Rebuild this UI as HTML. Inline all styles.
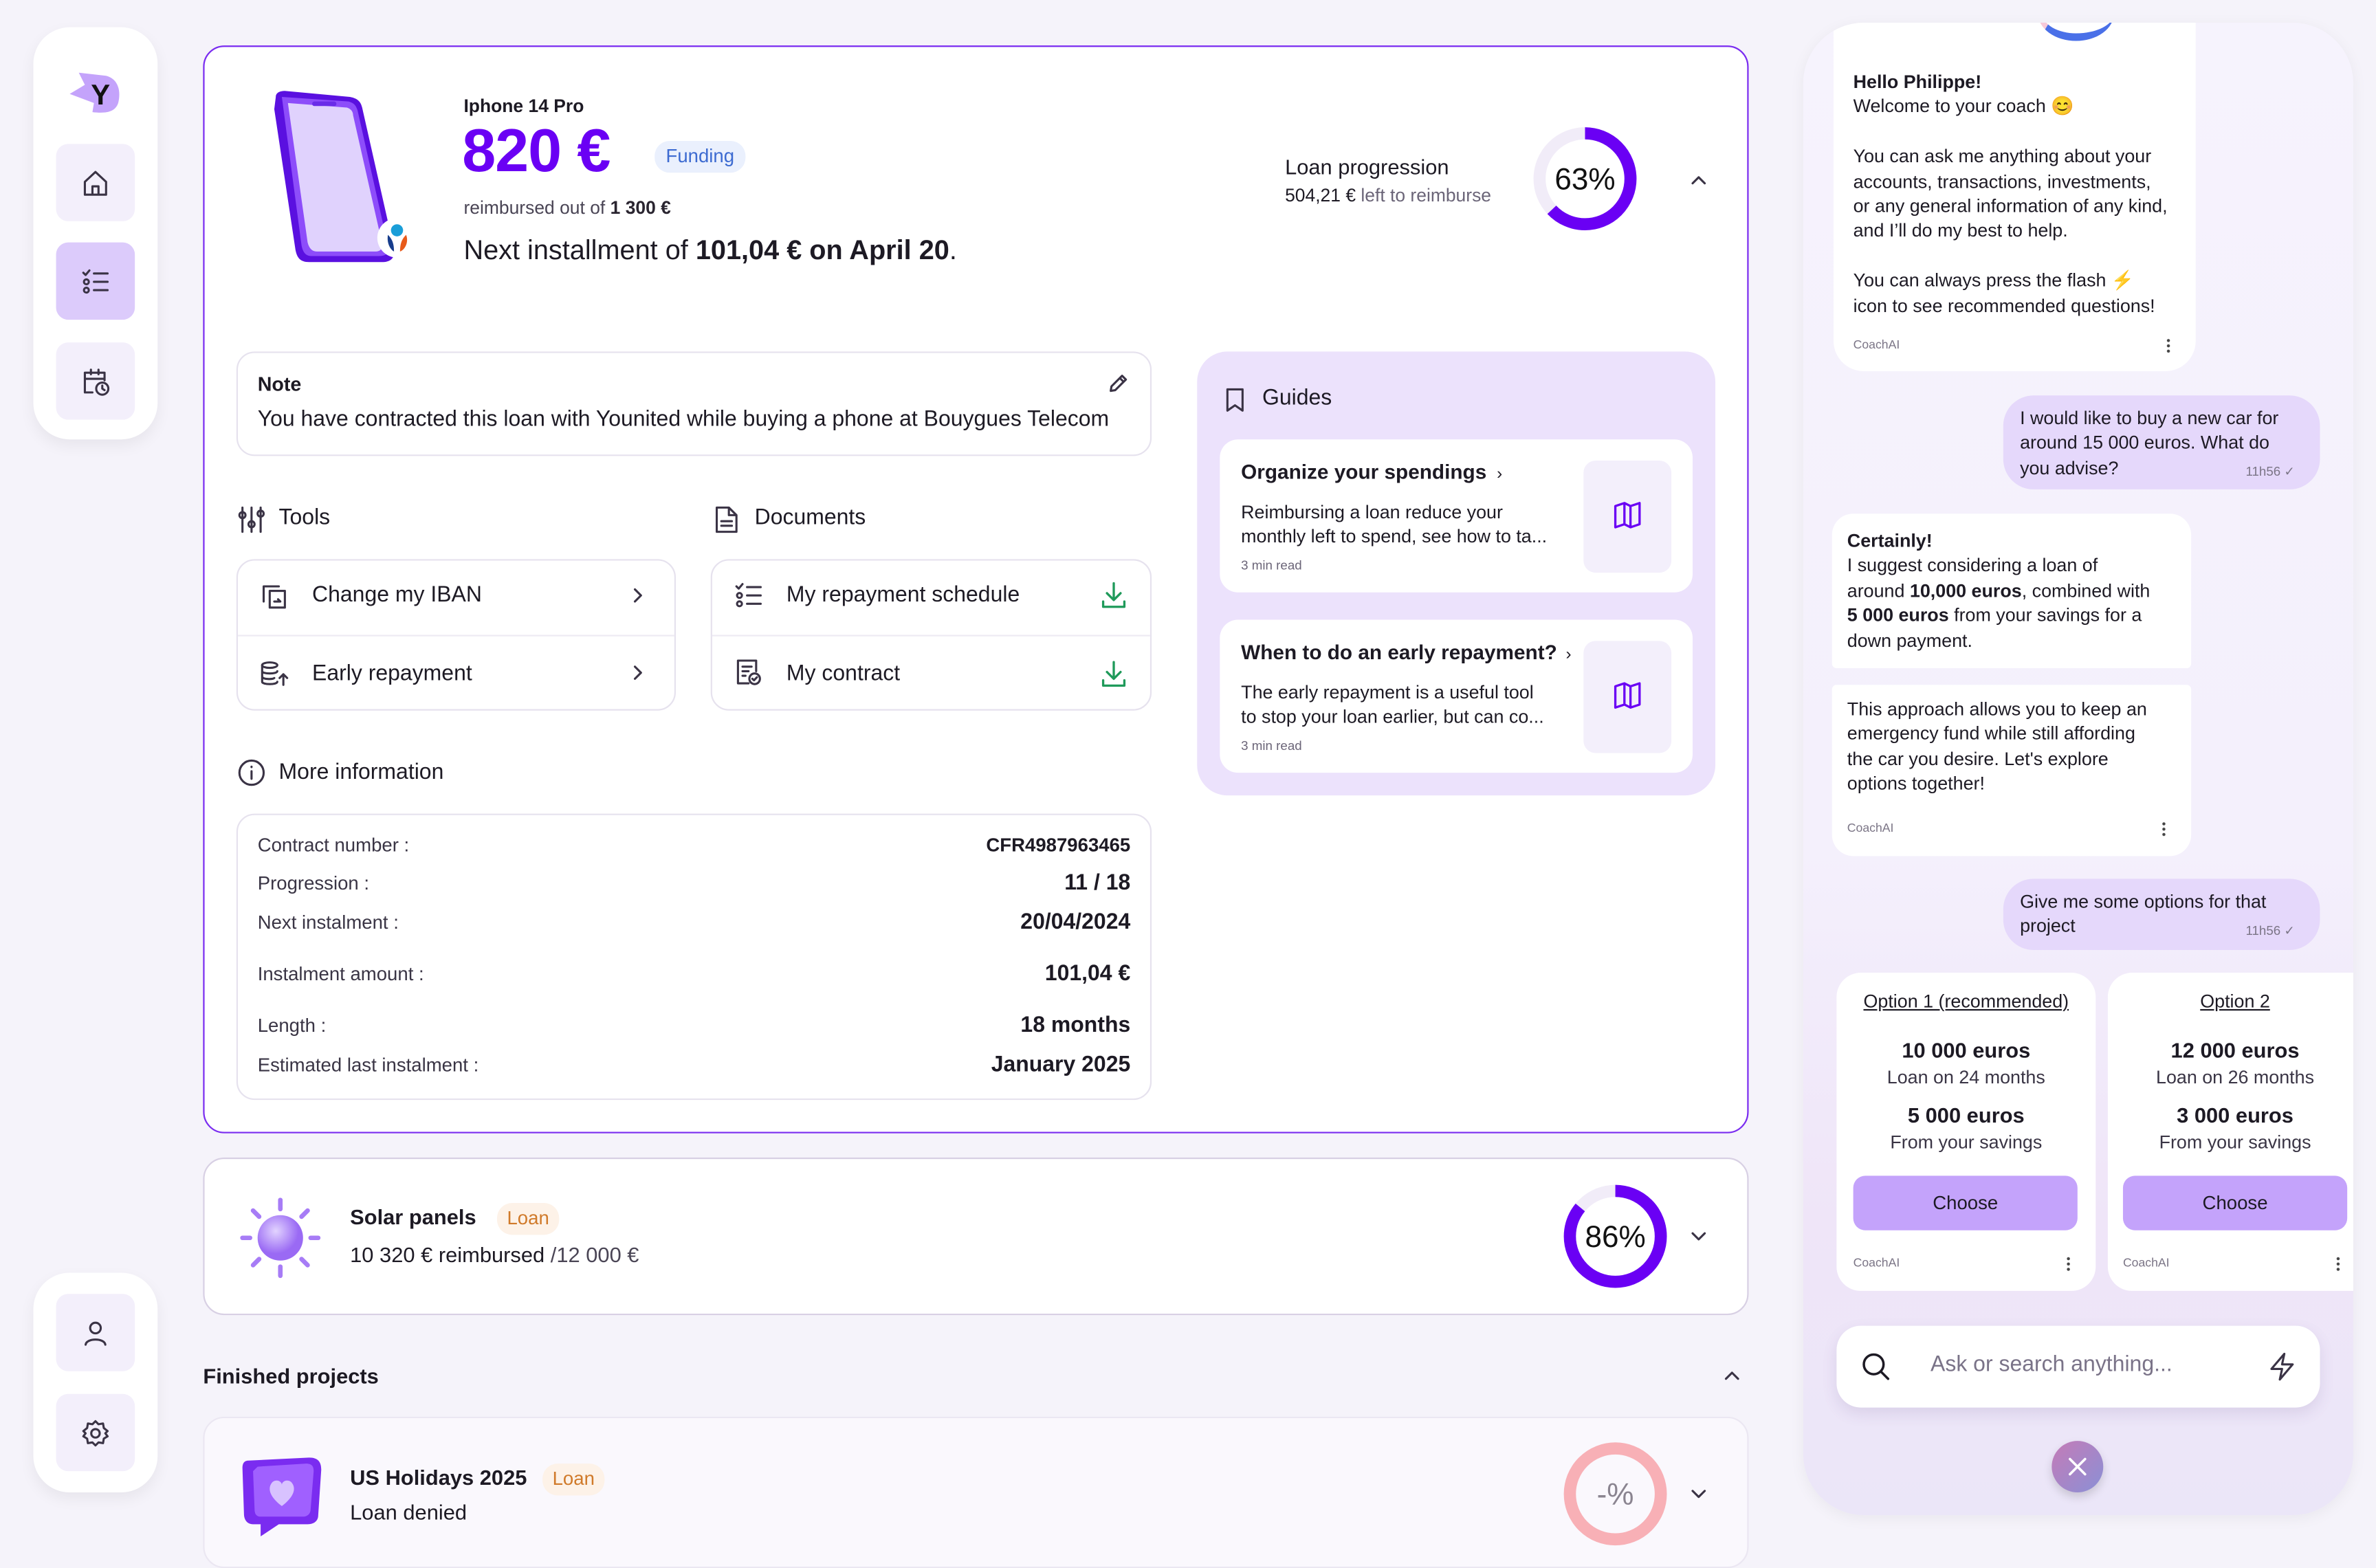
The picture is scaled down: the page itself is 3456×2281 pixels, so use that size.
<!DOCTYPE html>
<html><head><meta charset="utf-8">
<style>
*{box-sizing:border-box;margin:0;padding:0}
html,body{width:3456px;height:2234px;overflow:hidden;background:#f5f3fa}
#s{position:absolute;left:0;top:0;width:1568px;height:1014px;transform:scale(2.2041);transform-origin:0 0;font-family:"Liberation Sans",sans-serif;color:#1d1a24}
.a{position:absolute}
.t{position:absolute;white-space:nowrap;line-height:1}
.card{position:absolute;background:#fff;border-radius:12px}
.ib{position:absolute;left:37px;width:52px;height:51px;border-radius:8px;background:#f3effb;display:flex;align-items:center;justify-content:center}
svg{display:block}
.ln{stroke:#3a3345;fill:none;stroke-width:1.4;stroke-linecap:round;stroke-linejoin:round}
.chat{position:absolute;font-size:12.2px;line-height:16.4px;color:#1d1a24;white-space:nowrap}
.coach{position:absolute;font-size:8px;color:#7b7586}
.dots{position:absolute;width:2px;height:10px;background:radial-gradient(circle,#444 0.9px,transparent 1.1px) 0 0/2px 3.5px}
</style></head><body><div id="s">

<!-- sidebar top -->
<div class="card" style="left:22px;top:18px;width:82px;height:272px;border-radius:24px;box-shadow:0 4px 10px rgba(0,0,0,.06)"></div>
<svg class="a" style="left:44px;top:46px" width="38" height="32" viewBox="0 0 38 32"><path d="M8 2 L26 4 C34 6 36 14 34 22 C32 28 26 29 17 28 L18 22 L2 16 L12 10 Z" fill="#c4a3fb"/><text x="16" y="23" font-family="Liberation Sans" font-weight="700" font-size="19" fill="#111">Y</text></svg>
<div class="ib" style="top:95px"><svg width="20" height="20" viewBox="0 0 20 20"><path class="ln" d="M3 9 L10 2.5 L17 9 V17.5 H3 Z M8 17.5 V12 H12 V17.5"/></svg></div>
<div class="ib" style="top:160px;background:#dccbfb"><svg width="20" height="20" viewBox="0 0 20 20"><path class="ln" d="M2 4 L3.5 5.5 L6 2.5 M9 4.5 H18 M9 10 H18 M9 15.5 H18"/><circle class="ln" cx="4" cy="10" r="1.6"/><circle class="ln" cx="4" cy="15.5" r="1.6"/></svg></div>
<div class="ib" style="top:226px"><svg width="22" height="22" viewBox="0 0 22 22"><path class="ln" d="M9 18 H4 V5 H17 V10 M4 9 H17 M8 3 V6 M13 3 V6"/><circle class="ln" cx="15.5" cy="15.5" r="4"/><path class="ln" d="M15.5 13.5 V15.5 L17 16.5"/></svg></div>

<!-- sidebar bottom -->
<div class="card" style="left:22px;top:840px;width:82px;height:145px;border-radius:24px;box-shadow:0 4px 10px rgba(0,0,0,.06)"></div>
<div class="ib" style="top:854px"><svg width="20" height="20" viewBox="0 0 20 20"><circle class="ln" cx="10" cy="6.5" r="3.5"/><path class="ln" d="M3.5 17.5 C4 13 16 13 16.5 17.5"/></svg></div>
<div class="ib" style="top:920px"><svg width="20" height="20" viewBox="0 0 20 20"><circle class="ln" cx="10" cy="10" r="2.8"/><path class="ln" d="M10 2 L12 4 L15 3.5 L15.5 6.5 L18 8.5 L16.5 10 L18 12 L15.5 13.5 L15 16.5 L12 16 L10 18 L8 16 L5 16.5 L4.5 13.5 L2 12 L3.5 10 L2 8.5 L4.5 6.5 L5 3.5 L8 4 Z"/></svg></div>

<!-- main card -->
<div class="card" style="left:134px;top:30px;width:1020px;height:718px;border:1.5px solid #7a2cf0;border-radius:14px"></div>
<svg class="a" style="left:176px;top:58px" width="104" height="120" viewBox="0 0 104 120"><path d="M6 6 C6 3 9 2 12 2 L55 6 C60 7 62 9 63 13 L84 106 C85 112 82 115 76 115 L28 115 C22 115 20 112 19 107 L5 14 Z" fill="#5a10e0"/><path d="M10 6 L54 9 C58 10 59 12 60 15 L80 104 C81 109 79 111 74 111 L30 111 C26 111 24 109 23 104 Z" fill="#8d4dfa"/><path d="M14 10 L53 13 C56 14 57 16 57 18 L76 102 C77 106 75 108 72 108 L33 108 C30 108 28 106 27 102 Z" fill="#e0d2fd"/><rect x="30" y="9" width="16" height="3" rx="1.5" fill="#6a2ce8"/><circle cx="86" cy="99" r="13" fill="#fff"/><circle cx="86" cy="94" r="4" fill="#1a9ed8"/><path d="M80 97 C79 103 82 107 84 108 C84 103 83 100 80 97Z" fill="#173d8c"/><path d="M92 97 C94 102 91 107 88 108 C88 103 89 100 92 97Z" fill="#e85a1a"/></svg>
<div class="t" style="left:306px;top:64px;font-size:12px;font-weight:700">Iphone 14 Pro</div>
<div class="t" style="left:305px;top:80px;font-size:40px;font-weight:700;color:#6a00f4;letter-spacing:-0.5px">820 €</div>
<div class="a" style="left:432px;top:93px;width:60px;height:21px;border-radius:10px;background:#eaf0fd;color:#3d6bd1;font-size:12.5px;text-align:center;line-height:21px">Funding</div>
<div class="t" style="left:306px;top:131px;font-size:12px;color:#4a4555">reimbursed out of <b style="color:#2a2530">1 300 €</b></div>
<div class="t" style="left:306px;top:156px;font-size:18px">Next installment of <b>101,04 € on April 20</b>.</div>
<div class="t" style="left:848px;top:103px;font-size:14px">Loan progression</div>
<div class="t" style="left:848px;top:123px;font-size:12px;color:#1d1a24">504,21 € <span style="color:#6b6578">left to reimburse</span></div>
<svg class="a" style="left:1010px;top:82px" width="72" height="72" viewBox="0 0 72 72"><circle cx="36" cy="36" r="30" fill="none" stroke="#f1ecf8" stroke-width="8"/><circle cx="36" cy="36" r="30" fill="none" stroke="#6a00f4" stroke-width="8" stroke-dasharray="118.8 188.5" transform="rotate(-90 36 36)"/><text x="36" y="43" text-anchor="middle" font-family="Liberation Sans" font-size="20" fill="#111">63%</text></svg>
<svg class="a" style="left:1115px;top:113px" width="12" height="12" viewBox="0 0 12 12"><path class="ln" d="M2 8 L6 4 L10 8"/></svg>

<!-- note -->
<div class="card" style="left:156px;top:232px;width:604px;height:69px;border:1.3px solid #e6e2ee"></div>
<div class="t" style="left:170px;top:247px;font-size:13px;font-weight:700">Note</div>
<div class="t" style="left:170px;top:270px;font-size:14.5px">You have contracted this loan with Younited while buying a phone at Bouygues Telecom</div>
<svg class="a" style="left:731px;top:246px" width="14" height="14" viewBox="0 0 14 14"><path class="ln" d="M2 12 L2.5 9 L9.5 2 L12 4.5 L5 11.5 Z M8 3.5 L10.5 6"/></svg>

<!-- tools / docs -->
<svg class="a" style="left:156px;top:333px" width="20" height="20" viewBox="0 0 20 20"><path class="ln" d="M4 2 V18 M10 2 V18 M16 2 V18"/><circle cx="4" cy="7" r="2" fill="#fff" class="ln"/><circle cx="10" cy="13" r="2" fill="#fff" class="ln"/><circle cx="16" cy="6" r="2" fill="#fff" class="ln"/></svg>
<div class="t" style="left:184px;top:335px;font-size:14.5px">Tools</div>
<svg class="a" style="left:470px;top:333px" width="18" height="20" viewBox="0 0 18 20"><path class="ln" d="M3 2 H11 L16 7 V18 H3 Z M11 2 V7 H16 M6 11 H13 M6 14 H13"/></svg>
<div class="t" style="left:498px;top:335px;font-size:14.5px">Documents</div>

<div class="card" style="left:156px;top:369px;width:290px;height:100px;border:1.3px solid #e6e2ee"></div>
<div class="a" style="left:157px;top:419px;width:288px;height:1px;background:#eeebf3"></div>
<svg class="a" style="left:171px;top:384px" width="20" height="20" viewBox="0 0 20 20"><path class="ln" d="M3 13 V3 H13 M7 6 H17 V17 H7 Z M10 13 H14 L12.5 11.5"/></svg>
<div class="t" style="left:206px;top:386px;font-size:14.5px">Change my IBAN</div>
<svg class="a" style="left:415px;top:387px" width="12" height="12" viewBox="0 0 12 12"><path class="ln" d="M4 2 L8 6 L4 10"/></svg>
<svg class="a" style="left:171px;top:435px" width="20" height="20" viewBox="0 0 20 20"><ellipse class="ln" cx="7" cy="4" rx="5" ry="1.8"/><path class="ln" d="M2 4 V15 C2 17 12 17 12 15 M2 8 C2 10 12 10 12 8 M2 11.5 C2 13.5 9 13.5 10 12.5 M16 10 V17 M13.5 12.5 L16 10 L18.5 12.5"/></svg>
<div class="t" style="left:206px;top:438px;font-size:14.5px">Early repayment</div>
<svg class="a" style="left:415px;top:438px" width="12" height="12" viewBox="0 0 12 12"><path class="ln" d="M4 2 L8 6 L4 10"/></svg>

<div class="card" style="left:469px;top:369px;width:291px;height:100px;border:1.3px solid #e6e2ee"></div>
<div class="a" style="left:470px;top:419px;width:289px;height:1px;background:#eeebf3"></div>
<svg class="a" style="left:484px;top:383px" width="20" height="20" viewBox="0 0 20 20"><path class="ln" d="M2 4 L3.5 5.5 L6 2.5 M9 4.5 H18 M9 10 H18 M9 15.5 H18"/><circle class="ln" cx="4" cy="10" r="1.6"/><circle class="ln" cx="4" cy="15.5" r="1.6"/></svg>
<div class="t" style="left:519px;top:386px;font-size:14.5px">My repayment schedule</div>
<svg class="a" style="left:725px;top:383px" width="20" height="20" viewBox="0 0 20 20"><path d="M10 2 V13 M5.5 8.5 L10 13 L14.5 8.5 M3 14 V17.5 H17 V14" fill="none" stroke="#1f9a5a" stroke-width="1.5" stroke-linecap="round" stroke-linejoin="round"/></svg>
<svg class="a" style="left:484px;top:434px" width="20" height="20" viewBox="0 0 20 20"><path class="ln" d="M10 17 H3 V2 H15 V9 M6 6 H12 M6 9 H10 M6 12 H8"/><circle class="ln" cx="14" cy="14" r="3.5"/><path class="ln" d="M12.5 14 L13.6 15 L15.5 13"/></svg>
<div class="t" style="left:519px;top:438px;font-size:14.5px">My contract</div>
<svg class="a" style="left:725px;top:435px" width="20" height="20" viewBox="0 0 20 20"><path d="M10 2 V13 M5.5 8.5 L10 13 L14.5 8.5 M3 14 V17.5 H17 V14" fill="none" stroke="#1f9a5a" stroke-width="1.5" stroke-linecap="round" stroke-linejoin="round"/></svg>

<!-- more info -->
<svg class="a" style="left:156px;top:500px" width="20" height="20" viewBox="0 0 20 20"><circle class="ln" cx="10" cy="10" r="8"/><path class="ln" d="M10 9 V14 M10 6 V6.3"/></svg>
<div class="t" style="left:184px;top:503px;font-size:14.5px">More information</div>
<div class="card" style="left:156px;top:537px;width:604px;height:189px;border:1.3px solid #e6e2ee"></div>
<div class="t" style="left:170px;top:552px;font-size:12.5px;color:#3a3545">Contract number :</div>
<div class="t" style="left:600px;width:146px;text-align:right;top:552px;font-size:12.5px;font-weight:700">CFR4987963465</div>
<div class="t" style="left:170px;top:577px;font-size:12.5px;color:#3a3545">Progression :</div>
<div class="t" style="left:600px;width:146px;text-align:right;top:576px;font-size:14.5px;font-weight:700">11 / 18</div>
<div class="t" style="left:170px;top:603px;font-size:12.5px;color:#3a3545">Next instalment :</div>
<div class="t" style="left:600px;width:146px;text-align:right;top:602px;font-size:14.5px;font-weight:700">20/04/2024</div>
<div class="t" style="left:170px;top:637px;font-size:12.5px;color:#3a3545">Instalment amount :</div>
<div class="t" style="left:600px;width:146px;text-align:right;top:636px;font-size:14.5px;font-weight:700">101,04 €</div>
<div class="t" style="left:170px;top:671px;font-size:12.5px;color:#3a3545">Length :</div>
<div class="t" style="left:600px;width:146px;text-align:right;top:670px;font-size:14.5px;font-weight:700">18 months</div>
<div class="t" style="left:170px;top:697px;font-size:12.5px;color:#3a3545">Estimated last instalment :</div>
<div class="t" style="left:600px;width:146px;text-align:right;top:696px;font-size:14.5px;font-weight:700">January 2025</div>

<!-- guides -->
<div class="a" style="left:790px;top:232px;width:342px;height:293px;border-radius:20px;background:#ece2fc"></div>
<svg class="a" style="left:806px;top:255px" width="18" height="18" viewBox="0 0 18 18"><path class="ln" d="M4 2 H14 V16 L9 12.5 L4 16 Z"/></svg>
<div class="t" style="left:833px;top:256px;font-size:14.5px">Guides</div>
<div class="card" style="left:805px;top:290px;width:312px;height:101px"></div>
<div class="t" style="left:819px;top:305px;font-size:13.5px;font-weight:700">Organize your spendings <span style="font-weight:400;font-size:11px;margin-left:3px">›</span></div>
<div class="chat" style="left:819px;top:330px;font-size:12.2px">Reimbursing a loan reduce your<br>monthly left to spend, see how to ta...</div>
<div class="t" style="left:819px;top:369px;font-size:8.5px;color:#6b6578">3 min read</div>
<div class="a" style="left:1045px;top:304px;width:58px;height:74px;border-radius:8px;background:#f3effb"></div>
<svg class="a" style="left:1064px;top:330px" width="20" height="20" viewBox="0 0 20 20"><path d="M2 4 L8 2 L12 4 L18 2 V16 L12 18 L8 16 L2 18 Z M8 2 V16 M12 4 V18" fill="none" stroke="#6a00f4" stroke-width="1.5" stroke-linejoin="round"/></svg>
<div class="card" style="left:805px;top:409px;width:312px;height:101px"></div>
<div class="t" style="left:819px;top:424px;font-size:13.5px;font-weight:700">When to do an early repayment? <span style="font-weight:400;font-size:11px;margin-left:2px">›</span></div>
<div class="chat" style="left:819px;top:449px">The early repayment is a useful tool<br>to stop your loan earlier, but can co...</div>
<div class="t" style="left:819px;top:488px;font-size:8.5px;color:#6b6578">3 min read</div>
<div class="a" style="left:1045px;top:423px;width:58px;height:74px;border-radius:8px;background:#f3effb"></div>
<svg class="a" style="left:1064px;top:449px" width="20" height="20" viewBox="0 0 20 20"><path d="M2 4 L8 2 L12 4 L18 2 V16 L12 18 L8 16 L2 18 Z M8 2 V16 M12 4 V18" fill="none" stroke="#6a00f4" stroke-width="1.5" stroke-linejoin="round"/></svg>

<!-- solar -->
<div class="card" style="left:134px;top:764px;width:1020px;height:104px;border:1.3px solid #d8d0e4;border-radius:14px"></div>
<svg class="a" style="left:157px;top:789px" width="56" height="56" viewBox="0 0 56 56"><defs><radialGradient id="sg" cx="0.4" cy="0.35"><stop offset="0" stop-color="#e2d3ff"/><stop offset="1" stop-color="#9a6af4"/></radialGradient></defs><g stroke="#a77cf6" stroke-width="3" stroke-linecap="round"><path d="M28 3 V9 M28 47 V53 M3 28 H8 M48 28 H53 M10 10 L14 14 M42 42 L46 46 M46 10 L42 14 M10 46 L14 42"/></g><circle cx="28" cy="28" r="15" fill="url(#sg)"/></svg>
<div class="t" style="left:231px;top:796px;font-size:14px;font-weight:700">Solar panels</div>
<div class="a" style="left:328px;top:794px;width:41px;height:21px;border-radius:10px;background:#fdf2e8;color:#d07a2a;font-size:12.5px;text-align:center;line-height:21px">Loan</div>
<div class="t" style="left:231px;top:821px;font-size:14px">10 320 € reimbursed <span style="color:#4a4555">/12 000 €</span></div>
<svg class="a" style="left:1030px;top:780px" width="72" height="72" viewBox="0 0 72 72"><circle cx="36" cy="36" r="30" fill="none" stroke="#f1ecf8" stroke-width="8"/><circle cx="36" cy="36" r="30" fill="none" stroke="#6a00f4" stroke-width="8" stroke-dasharray="162 188.5" transform="rotate(-90 36 36)"/><text x="36" y="43" text-anchor="middle" font-family="Liberation Sans" font-size="20" fill="#111">86%</text></svg>
<svg class="a" style="left:1115px;top:810px" width="12" height="12" viewBox="0 0 12 12"><path class="ln" d="M2 4 L6 8 L10 4"/></svg>

<div class="t" style="left:134px;top:901px;font-size:14px;font-weight:700">Finished projects</div>
<svg class="a" style="left:1137px;top:902px" width="12" height="12" viewBox="0 0 12 12"><path class="ln" d="M2 8 L6 4 L10 8"/></svg>

<div class="a" style="left:134px;top:935px;width:1020px;height:100px;border:1.3px solid #ebe7f2;border-radius:14px;background:#faf8fd"></div>
<svg class="a" style="left:158px;top:960px" width="56" height="54" viewBox="0 0 56 54"><path d="M6 4 L46 2 C52 2 54 5 54 10 L52 40 C52 44 49 46 45 46 L26 46 L14 54 L14 46 L9 46 C5 46 3 43 3 39 L2 9 C2 6 3 4 6 4Z" fill="#7a2cf0"/><path d="M12 8 L44 6 C48 6 49 8 49 11 L47 36 C47 39 45 41 42 41 L14 41 C11 41 10 39 10 36 L9 11 Z" fill="#a060ff"/><path d="M28 34 C20 28 18 22 22 18 C25 16 28 18 28 20 C28 18 31 16 34 18 C38 22 36 28 28 34Z" fill="#d8c2ff"/></svg>
<div class="t" style="left:231px;top:968px;font-size:14px;font-weight:700">US Holidays 2025</div>
<div class="a" style="left:358px;top:966px;width:41px;height:21px;border-radius:10px;background:#fdf2e8;color:#d07a2a;font-size:12.5px;text-align:center;line-height:21px">Loan</div>
<div class="t" style="left:231px;top:991px;font-size:14px">Loan denied</div>
<svg class="a" style="left:1030px;top:950px" width="72" height="72" viewBox="0 0 72 72"><circle cx="36" cy="36" r="30" fill="none" stroke="#f8b0b6" stroke-width="8"/><text x="36" y="43" text-anchor="middle" font-family="Liberation Sans" font-size="20" fill="#8a8490">-%</text></svg>
<svg class="a" style="left:1115px;top:980px" width="12" height="12" viewBox="0 0 12 12"><path class="ln" d="M2 4 L6 8 L10 4"/></svg>

<!-- right panel -->
<div class="a" style="left:1190px;top:15px;width:363px;height:985px;border-radius:40px;background:linear-gradient(180deg,#f6f3fd 0%,#f4f0fc 55%,#efe5f8 80%,#ebe6f8 100%);box-shadow:0 2px 10px rgba(0,0,0,.05);overflow:hidden">
<div class="a" style="left:20px;top:-10px;width:239px;height:240px;background:#fff;border-radius:0 0 20px 20px"></div>
<div class="a" style="left:155px;top:-24px;width:50px;height:36px;border-radius:50%;border-bottom:5px solid #4a70e8;border-left:3px solid #f7c9d8"></div>
</div>
<div class="chat" style="left:1223px;top:46px"><b>Hello Philippe!</b><br>Welcome to your coach 😊<br><br>You can ask me anything about your<br>accounts, transactions, investments,<br>or any general information of any kind,<br>and I’ll do my best to help.<br><br>You can always press the flash <span style="color:#f5a623">⚡</span><br>icon to see recommended questions!</div>
<div class="coach" style="left:1223px;top:223px">CoachAI</div>
<div class="dots" style="left:1430px;top:223px"></div>

<div class="a" style="left:1322px;top:261px;width:209px;height:62px;border-radius:20px;background:#e5d8fb"></div>
<div class="chat" style="left:1333px;top:268px">I would like to buy a new car for<br>around 15 000 euros. What do<br>you advise?</div>
<div class="coach" style="left:1482px;top:306px;font-size:8.5px">11h56 ✓</div>

<div class="a" style="left:1209px;top:339px;width:237px;height:102px;border-radius:14px 14px 3px 3px;background:#fff"></div>
<div class="chat" style="left:1219px;top:349px"><b>Certainly!</b><br>I suggest considering a loan of<br>around <b>10,000 euros</b>, combined with<br><b>5 000 euros</b> from your savings for a<br>down payment.</div>
<div class="a" style="left:1209px;top:452px;width:237px;height:113px;border-radius:3px 3px 14px 14px;background:#fff"></div>
<div class="chat" style="left:1219px;top:460px">This approach allows you to keep an<br>emergency fund while still affording<br>the car you desire. Let's explore<br>options together!</div>
<div class="coach" style="left:1219px;top:542px">CoachAI</div>
<div class="dots" style="left:1427px;top:542px"></div>

<div class="a" style="left:1322px;top:580px;width:209px;height:47px;border-radius:20px;background:#e5d8fb"></div>
<div class="chat" style="left:1333px;top:587px">Give me some options for that<br>project</div>
<div class="coach" style="left:1482px;top:609px;font-size:8.5px">11h56 ✓</div>

<div class="a" style="left:1212px;top:642px;width:171px;height:210px;border-radius:16px;background:#fff"></div>
<div class="a" style="left:1391px;top:642px;width:162px;height:210px;border-radius:16px 0 0 16px;background:#fff"></div>
<div class="a" style="left:1212px;top:654px;width:171px;text-align:center;font-size:12.2px;text-decoration:underline">Option 1 (recommended)</div>
<div class="a" style="left:1212px;top:685px;width:171px;text-align:center;font-size:14px;font-weight:700;line-height:17px">10 000 euros<br><span style="font-size:12.2px;font-weight:400;color:#3a3545">Loan on 24 months</span></div>
<div class="a" style="left:1212px;top:728px;width:171px;text-align:center;font-size:14px;font-weight:700;line-height:17px">5 000 euros<br><span style="font-size:12.2px;font-weight:400;color:#3a3545">From your savings</span></div>
<div class="a" style="left:1223px;top:776px;width:148px;height:36px;border-radius:8px;background:#c4a3fb;text-align:center;line-height:36px;font-size:12.5px">Choose</div>
<div class="coach" style="left:1223px;top:829px">CoachAI</div>
<div class="dots" style="left:1364px;top:829px"></div>
<div class="a" style="left:1391px;top:654px;width:168px;text-align:center;font-size:12.2px;text-decoration:underline">Option 2</div>
<div class="a" style="left:1391px;top:685px;width:168px;text-align:center;font-size:14px;font-weight:700;line-height:17px">12 000 euros<br><span style="font-size:12.2px;font-weight:400;color:#3a3545">Loan on 26 months</span></div>
<div class="a" style="left:1391px;top:728px;width:168px;text-align:center;font-size:14px;font-weight:700;line-height:17px">3 000 euros<br><span style="font-size:12.2px;font-weight:400;color:#3a3545">From your savings</span></div>
<div class="a" style="left:1401px;top:776px;width:148px;height:36px;border-radius:8px;background:#c4a3fb;text-align:center;line-height:36px;font-size:12.5px">Choose</div>
<div class="coach" style="left:1401px;top:829px">CoachAI</div>
<div class="dots" style="left:1542px;top:829px"></div>

<div class="a" style="left:1212px;top:875px;width:319px;height:54px;border-radius:16px;background:#fff;box-shadow:0 4px 10px rgba(80,60,120,.12)"></div>
<svg class="a" style="left:1228px;top:892px" width="20" height="20" viewBox="0 0 20 20"><circle cx="8.5" cy="8.5" r="6.5" fill="none" stroke="#1d1a24" stroke-width="1.6"/><path d="M13.5 13.5 L18 18" stroke="#1d1a24" stroke-width="1.6" stroke-linecap="round"/></svg>
<div class="t" style="left:1274px;top:894px;font-size:14.5px;color:#7a7388">Ask or search anything...</div>
<svg class="a" style="left:1496px;top:892px" width="20" height="20" viewBox="0 0 20 20"><path class="ln" d="M11.5 1.5 L3 11.5 H10 L8.5 18.5 L17 8.5 H10 Z"/></svg>

<div class="a" style="left:1354px;top:951px;width:34px;height:34px;border-radius:50%;background:linear-gradient(135deg,#c57bb7,#8a90d6);box-shadow:0 3px 6px rgba(0,0,0,.15)"></div>
<svg class="a" style="left:1363px;top:960px" width="16" height="16" viewBox="0 0 16 16"><path d="M3 3 L13 13 M13 3 L3 13" stroke="#fff" stroke-width="1.6" stroke-linecap="round"/></svg>

</div></body></html>
